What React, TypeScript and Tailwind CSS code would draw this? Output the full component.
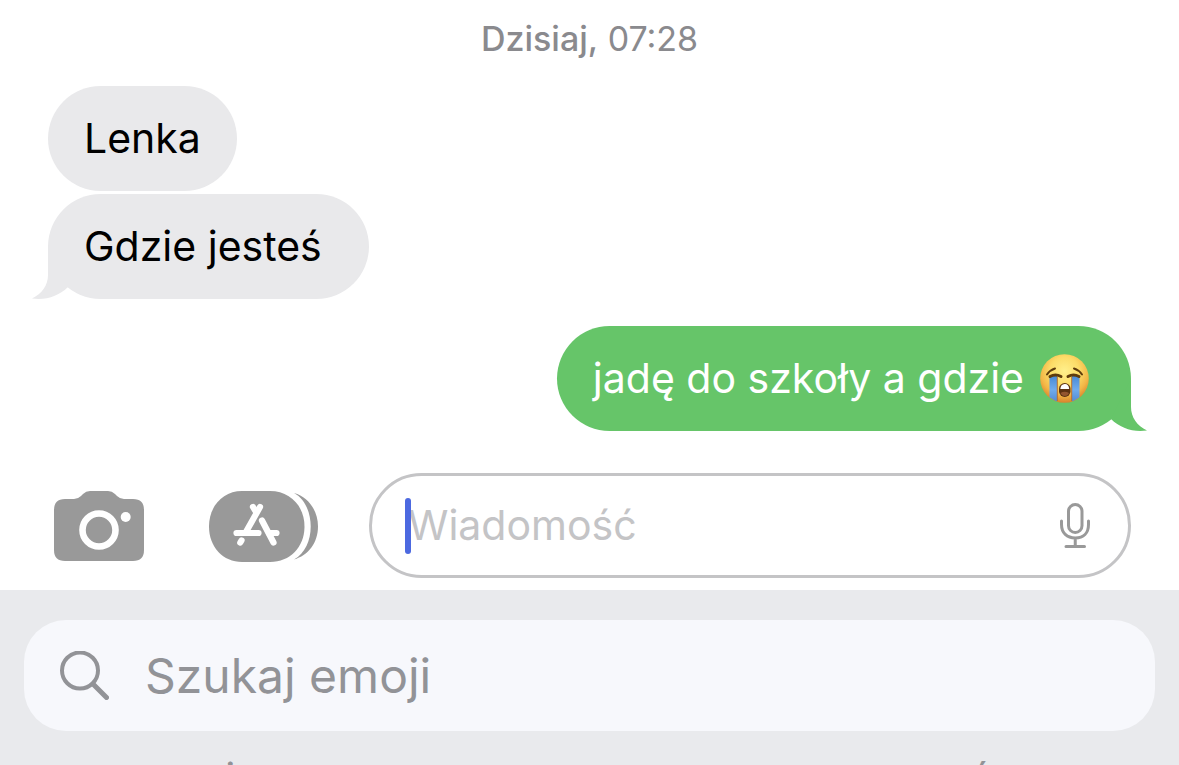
import { useState, type ReactNode } from "react";

interface Message {
  id: number;
  text: string;
  sent: boolean;
  hasTail: boolean;
  emoji?: ReactNode;
}

function SobEmoji() {
  return (
    <svg
      role="img"
      aria-label="😭"
      viewBox="0 0 49 49"
      className="h-[49px] w-[49px] shrink-0"
    >
      <defs>
        <radialGradient id="face" cx="0.5" cy="0.35" r="0.66">
          <stop offset="0" stopColor="#fff08c" />
          <stop offset="0.45" stopColor="#fcdc68" />
          <stop offset="0.75" stopColor="#f3b646" />
          <stop offset="1" stopColor="#d57f2a" />
        </radialGradient>
        <linearGradient id="tear" x1="0" y1="0" x2="0" y2="1">
          <stop offset="0" stopColor="#4789d6" />
          <stop offset="0.5" stopColor="#70abec" />
          <stop offset="1" stopColor="#4f88d2" />
        </linearGradient>
        <clipPath id="faceClip">
          <circle cx="24.5" cy="24.5" r="24" />
        </clipPath>
      </defs>
      <circle cx="24.5" cy="24.5" r="24.3" fill="url(#face)" />
      <g clipPath="url(#faceClip)">
        <path d="M9.5 22h7.500v27h-7.500z" fill="url(#tear)" />
        <path d="M32 22h7.500v27H32z" fill="url(#tear)" />
        <path
          d="M17.300 23v24M31.700 23v24"
          stroke="#b06f38"
          strokeWidth="1"
          fill="none"
        />
      </g>
      <g fill="none" stroke="#5f3c0c" strokeLinecap="round">
        <path d="M7 20.500q3-4.500 8-6" strokeWidth="2" />
        <path d="M42 20.500q-3-4.500-8-6" strokeWidth="2" />
        <path d="M10 22.500q5.500-3 11 0" strokeWidth="3" />
        <path d="M39 22.500q-5.500-3-11 0" strokeWidth="3" />
      </g>
      <rect x="19" y="29" width="11.500" height="14" rx="5.750" fill="#5c3212" />
      <path d="M20.300 35q.4-4.800 4.400-5t4.500 5z" fill="#fff" />
      <path d="M20.500 39q4-2.500 8.500 0-1.200 3-4.200 3t-4.300-3z" fill="#94552f" />
    </svg>
  );
}

function CameraIcon() {
  return (
    <svg viewBox="0 0 90 70" className="h-[70px] w-[90px]" aria-hidden="true">
      <path
        fill="#999"
        d="M11 8h9q4 0 7-3l2-2q3-3 7-3h18q4 0 7 3l2 2q3 3 7 3h9q11 0 11 11v40q0 11-11 11H11Q0 70 0 59V19Q0 8 11 8z"
      />
      <circle cx="45" cy="39" r="16.500" fill="none" stroke="#fff" strokeWidth="6.600" />
      <circle cx="71.700" cy="26" r="5" fill="#fff" />
    </svg>
  );
}

function AppStoreIcon() {
  return (
    <svg viewBox="0 0 109 72" className="h-[72px] w-[109px]" aria-hidden="true">
      <path
        fill="#999"
        d="M33 1h28c20 0 34.500 15 34.500 35.500S81 72 61 72H33C14 72 0 57 0 36.500S14 1 33 1z"
      />
      <path
        fill="#999"
        d="M85 3c14 4 24 17 24 33.500S99 65.500 85 69.500c11-6 16.700-19 16.700-33S96 9 85 3z"
      />
      <g fill="none" stroke="#fff" strokeWidth="6.200" strokeLinecap="round">
        <path d="M51 17L37.500 41" />
        <path d="M44 17l3 5" />
        <path d="M27.500 43h22M60 43h7.500" />
        <path d="M53 30.500l11.500 22" />
        <path d="M32.500 50.500l-1.200 2" />
      </g>
    </svg>
  );
}

function MicIcon() {
  return (
    <svg
      viewBox="0 0 30 46"
      className="h-[46px] w-[30px]"
      fill="none"
      stroke="#999"
      strokeWidth="3"
      strokeLinecap="round"
      aria-hidden="true"
    >
      <rect x="8.500" y="1.500" width="13.500" height="28" rx="6.750" />
      <path d="M1.500 18v3.500C1.500 30 7 35 15.250 35S28.500 30 28.500 21.500V18M15.250 35v8M6 43.500h18.500" />
    </svg>
  );
}

function SearchIcon() {
  return (
    <svg
      viewBox="0 0 49 49"
      className="h-[49px] w-[49px] shrink-0"
      fill="none"
      stroke="#929397"
      strokeLinecap="round"
      aria-hidden="true"
    >
      <circle cx="20" cy="19.500" r="18" strokeWidth="4" />
      <path d="M33 33l13.500 13.500" strokeWidth="5" />
    </svg>
  );
}

function Tail({ sent }: { sent: boolean }) {
  return (
    <svg
      viewBox="0 0 36 52"
      className={
        sent
          ? "absolute -right-4 bottom-0 h-[52px] w-9 -scale-x-100 text-[#66c569]"
          : "absolute -left-4 bottom-0 h-[52px] w-9 text-[#e9e9eb]"
      }
      aria-hidden="true"
    >
      <path
        fill="currentColor"
        d="M16 0v28C16 38 10 47 0 51.500 14 53.500 27 49 36 40z"
      />
    </svg>
  );
}

function Bubble({ message }: { message: Message }) {
  return (
    <li
      className={
        message.sent
          ? "relative mt-6 flex h-[105px] items-center gap-4 self-end rounded-full bg-[#66c569] pl-9 pr-[42px] text-white"
          : "relative flex h-[105px] items-center self-start rounded-full bg-[#e9e9eb] px-9 text-black"
      }
    >
      {message.hasTail && <Tail sent={message.sent} />}
      <span className="relative whitespace-pre">{message.text}</span>
      {message.emoji}
    </li>
  );
}

const messages: Message[] = [
  { id: 1, text: "Lenka", sent: false, hasTail: false },
  { id: 2, text: "Gdzie jesteś ", sent: false, hasTail: true },
  {
    id: 3,
    text: "jadę do szkoły a gdzie",
    sent: true,
    hasTail: true,
    emoji: <SobEmoji />,
  },
];

export default function App() {
  const [draft, setDraft] = useState("");
  const [query, setQuery] = useState("");

  return (
    <div className="flex h-screen flex-col overflow-hidden bg-white font-['Inter',sans-serif]">
      <main className="px-12 pt-4">
        <p className="text-center text-[34px] leading-[46px] text-[#8a8a8e]">
          <span className="font-medium">Dzisiaj,</span> 07:28
        </p>
        <ul className="mt-6 flex flex-col gap-[3px] text-[41px]">
          {messages.map((m) => (
            <Bubble key={m.id} message={m} />
          ))}
        </ul>
      </main>

      <form
        className="mt-[42px] flex items-center pl-[54px] pr-12"
        onSubmit={(e) => e.preventDefault()}
      >
        <button type="button" aria-label="Aparat" className="mr-[65px]">
          <CameraIcon />
        </button>
        <button type="button" aria-label="Aplikacje" className="mr-[51px]">
          <AppStoreIcon />
        </button>
        <div className="relative flex h-[105px] min-w-0 flex-1 items-center rounded-full border-[3px] border-[#c4c4c6] pl-9 pr-[38px]">
          <span className="absolute left-[33px] h-14 w-[6px] rounded-full bg-[#4c69e0]" />
          <input
            type="text"
            aria-label="Wiadomość"
            placeholder="Wiadomość"
            value={draft}
            onChange={(e) => setDraft(e.target.value)}
            className="min-w-0 flex-1 bg-transparent text-[41px] text-black outline-none placeholder:text-[#c4c4c6]"
          />
          <button type="button" aria-label="Dyktuj">
            <MicIcon />
          </button>
        </div>
      </form>

      <section className="mt-3 flex-1 bg-[#e9eaed] px-6 pt-[30px]">
        <label className="flex h-[111px] items-center gap-9 rounded-[42px] bg-[#f7f8fc] px-9">
          <SearchIcon />
          <input
            type="text"
            aria-label="Szukaj emoji"
            placeholder="Szukaj emoji"
            value={query}
            onChange={(e) => setQuery(e.target.value)}
            className="min-w-0 flex-1 bg-transparent text-[48px] text-black outline-none placeholder:text-[#929397]"
          />
        </label>
        <div className="mt-7 flex whitespace-nowrap pl-[14px] text-[36px] font-medium leading-[46px] text-[#929397]">
          <h2 className="w-[881px] shrink-0">CZĘSTO UŻYWANE</h2>
          <h2>BUŹKI I OSOBY</h2>
        </div>
      </section>
    </div>
  );
}
